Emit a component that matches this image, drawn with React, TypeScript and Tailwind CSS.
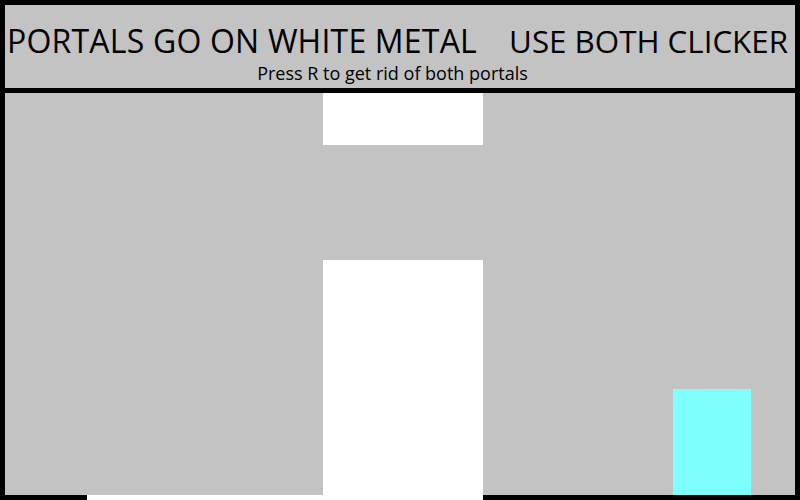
export default function App() {
    return (
        <div className="w-[800px] h-[500px] bg-black p-[5px] flex flex-col gap-[5px] overflow-hidden font-['Open_Sans',sans-serif] text-black">
            {/* Header */}
            <div className="h-[83px] bg-[#c3c3c3] flex flex-col">
                <div className="flex justify-between items-baseline pl-[2px] pr-[7px] pt-[15px] leading-[42px] whitespace-nowrap">
                    <span className="text-[32px] tracking-[0.2px]">PORTALS GO ON WHITE METAL</span>
                    <span className="text-[31.3px]">USE BOTH CLICKER</span>
                </div>
                <div className="text-center pr-[15px] text-[18px] leading-[22px]">
                    Press R to get rid of both portals
                </div>
            </div>

            {/* Level */}
            <div className="flex-1 relative bg-[#c3c3c3]">
                <div className="absolute left-[318px] top-0 w-[160px] h-[52px] bg-white" />
                <div className="absolute left-[318px] top-[167px] w-[160px] h-[240px] bg-white" />
                <div className="absolute left-[82px] top-[402px] w-[396px] h-[5px] bg-white" />
                <div className="absolute left-[668px] top-[296px] w-[78px] h-[106px] bg-[#80ffff]" />
            </div>
        </div>
    );
}
